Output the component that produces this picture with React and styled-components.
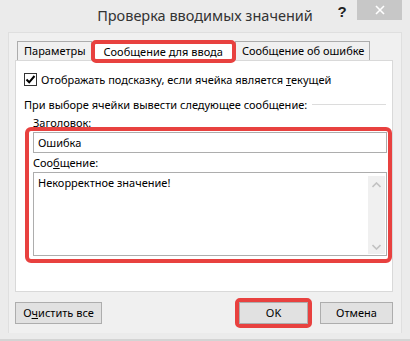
import React from "react";
import styled, { createGlobalStyle } from "styled-components";

const GlobalStyle = createGlobalStyle`
  html, body {
    margin: 0;
    padding: 0;
    background: #ebebeb;
  }
  * {
    box-sizing: border-box;
  }
`;

const FONT = `"Noto Sans", "Open Sans", sans-serif`;
const RED = "#e8413f";

const Window = styled.div`
  width: 410px;
  height: 341px;
  background: #ebebeb;
  border-bottom: 2px solid #d4d4d4;
  font-family: ${FONT};
  font-size: 11px;
  color: #000;
  display: flex;
  flex-direction: column;
`;

const TitleBar = styled.div`
  height: 32px;
  display: grid;
  grid-template-columns: 1fr auto 1fr;
`;

const Title = styled.div`
  grid-column: 2;
  padding-top: 5px;
  font-size: 14.5px;
  color: #333;
`;

const Controls = styled.div`
  grid-column: 3;
  display: flex;
  justify-content: flex-end;
  align-items: flex-start;
  padding-right: 8px;
`;

const Help = styled.div`
  width: 28px;
  height: 22px;
  display: flex;
  align-items: center;
  justify-content: center;
  font-weight: bold;
  font-size: 15px;
  color: #222;
  font-family: "Liberation Sans", sans-serif;
  padding-right: 2px;
`;

const Close = styled.div`
  width: 45px;
  height: 20px;
  background: #c7c7c7;
  display: flex;
  align-items: center;
  justify-content: center;
`;

const Client = styled.div`
  margin: 0 8px;
  height: 301px;
  background: #f0f0f0;
  border: 1px solid #dfdfdf;
  border-bottom: none;
  padding: 8px 8px 0 6px;
  display: flex;
  flex-direction: column;
`;

const TabRow = styled.div`
  display: flex;
  align-items: flex-end;
  height: 19px;
  padding-left: 2px;
  position: relative;
  z-index: 1;
`;

const Tab = styled.div`
  height: ${(p) => (p.$active ? "23px" : "19px")};
  margin: ${(p) => (p.$active ? "0 -1px -3px -1px" : "0")};
  padding: ${(p) => (p.$active ? "0 9px 1px" : "0 5px 1px 6px")};
  display: flex;
  align-items: center;
  background: ${(p) => (p.$active ? "#fff" : "#f0f0f0")};
  border: ${(p) => (p.$active ? `4px solid ${RED}` : "1px solid #acacac")};
  border-bottom: ${(p) => (p.$active ? `4px solid ${RED}` : "none")};
  border-radius: ${(p) => (p.$active ? "5px" : "0")};
  white-space: nowrap;
  position: relative;
  z-index: ${(p) => (p.$active ? 1 : 0)};
`;

const Panel = styled.div`
  height: 232px;
  background: #fff;
  border: 1px solid #d9d9d9;
  padding: 11px 0 0 8px;
  display: flex;
  flex-direction: column;
`;

const CheckRow = styled.div`
  display: flex;
  align-items: center;
  gap: 4px;
  height: 14px;
`;

const Box = styled.div`
  width: 13px;
  height: 13px;
  border: 1px solid #333;
  background: #fff;
  display: flex;
  align-items: center;
  justify-content: center;
`;

const GroupRow = styled.div`
  display: flex;
  align-items: center;
  gap: 5px;
  margin-top: 10px;
  height: 16px;
`;

const GroupLine = styled.div`
  flex: 1;
  height: 1px;
  background: #dcdcdc;
  margin-right: 6px;
`;

const Label = styled.div`
  padding-left: ${(p) => p.$indent || 0}px;
  height: ${(p) => p.$h || 16}px;
  line-height: ${(p) => p.$h || 16}px;
  margin-top: ${(p) => p.$top || 0}px;
`;

const Highlight = styled.div`
  margin-left: 1px;
  height: 136px;
  border: 4px solid ${RED};
  border-radius: 6px;
  padding: 1px 1px 0 4px;
  display: flex;
  flex-direction: column;
`;

const Input = styled.div`
  height: 21px;
  border: 1px solid #adadad;
  padding: 0 4px;
  line-height: 19px;
`;

const TextArea = styled.div`
  height: 84px;
  margin-top: 1px;
  border: 1px solid #adadad;
  padding: 2px 0 0 4px;
  display: flex;
`;

const AreaText = styled.div`
  flex: 1;
`;

const Scroll = styled.div`
  width: 17px;
  margin: 1px 1px 1px 0;
  background: #f0f0f0;
  display: flex;
  flex-direction: column;
  justify-content: space-between;
  align-items: center;
  padding: 6px 0 4px;
`;

const Footer = styled.div`
  display: flex;
  align-items: center;
  height: 41px;
`;

const Button = styled.div`
  height: 22px;
  width: ${(p) => p.$w}px;
  border: 1px solid #adadad;
  background: #e1e1e1;
  display: flex;
  align-items: center;
  justify-content: center;
  padding-bottom: 1px;
  margin-left: ${(p) => p.$ml || 0}px;
`;

const RedFrame = styled.div`
  margin-left: auto;
  border: 4px solid ${RED};
  border-radius: 5px;
  display: flex;
`;

const Chevron = ({ up }) => (
  <svg width="9" height="6" viewBox="0 0 9 6">
    <path
      d={up ? "M0.5 5 L4.5 1 L8.5 5" : "M0.5 1 L4.5 5 L8.5 1"}
      fill="none"
      stroke="#c2c2c2"
      strokeWidth="1.6"
    />
  </svg>
);

export default function App() {
  return (
    <>
      <GlobalStyle />
      <Window>
        <TitleBar>
          <Title>Проверка вводимых значений</Title>
          <Controls>
            <Help>?</Help>
            <Close>
              <svg width="10" height="10" viewBox="0 0 10 10">
                <path d="M1 1 L9 9 M9 1 L1 9" stroke="#fff" strokeWidth="1.6" />
              </svg>
            </Close>
          </Controls>
        </TitleBar>
        <Client>
          <TabRow>
            <Tab>Параметры</Tab>
            <Tab $active>Сообщение для ввода</Tab>
            <Tab>Сообщение об ошибке</Tab>
          </TabRow>
          <Panel>
            <CheckRow>
              <Box>
                <svg width="11" height="11" viewBox="0 0 11 11">
                  <path d="M1.5 5.5 L4.2 8.3 L9.5 2" fill="none" stroke="#000" strokeWidth="2" />
                </svg>
              </Box>
              <span>
                Отображать подсказку, если ячейка является <u>т</u>екущей
              </span>
            </CheckRow>
            <GroupRow>
              <span>При выборе ячейки вывести следующее сообщение:</span>
              <GroupLine />
            </GroupRow>
            <Label $indent={9} $top={5} $h={12}>
              <u>З</u>аголовок:
            </Label>
            <Highlight style={{ marginTop: "-2px" }}>
              <Input>Ошибка</Input>
              <Label $top={2}>
                Соо<u>б</u>щение:
              </Label>
              <TextArea>
                <AreaText>Некорректное значение!</AreaText>
                <Scroll>
                  <Chevron up />
                  <Chevron />
                </Scroll>
              </TextArea>
            </Highlight>
          </Panel>
          <Footer>
            <Button $w={87}>
              О<u>ч</u>истить все
            </Button>
            <RedFrame>
              <Button $w={69}>OK</Button>
            </RedFrame>
            <Button $w={73} $ml={8}>Отмена</Button>
          </Footer>
        </Client>
      </Window>
    </>
  );
}
